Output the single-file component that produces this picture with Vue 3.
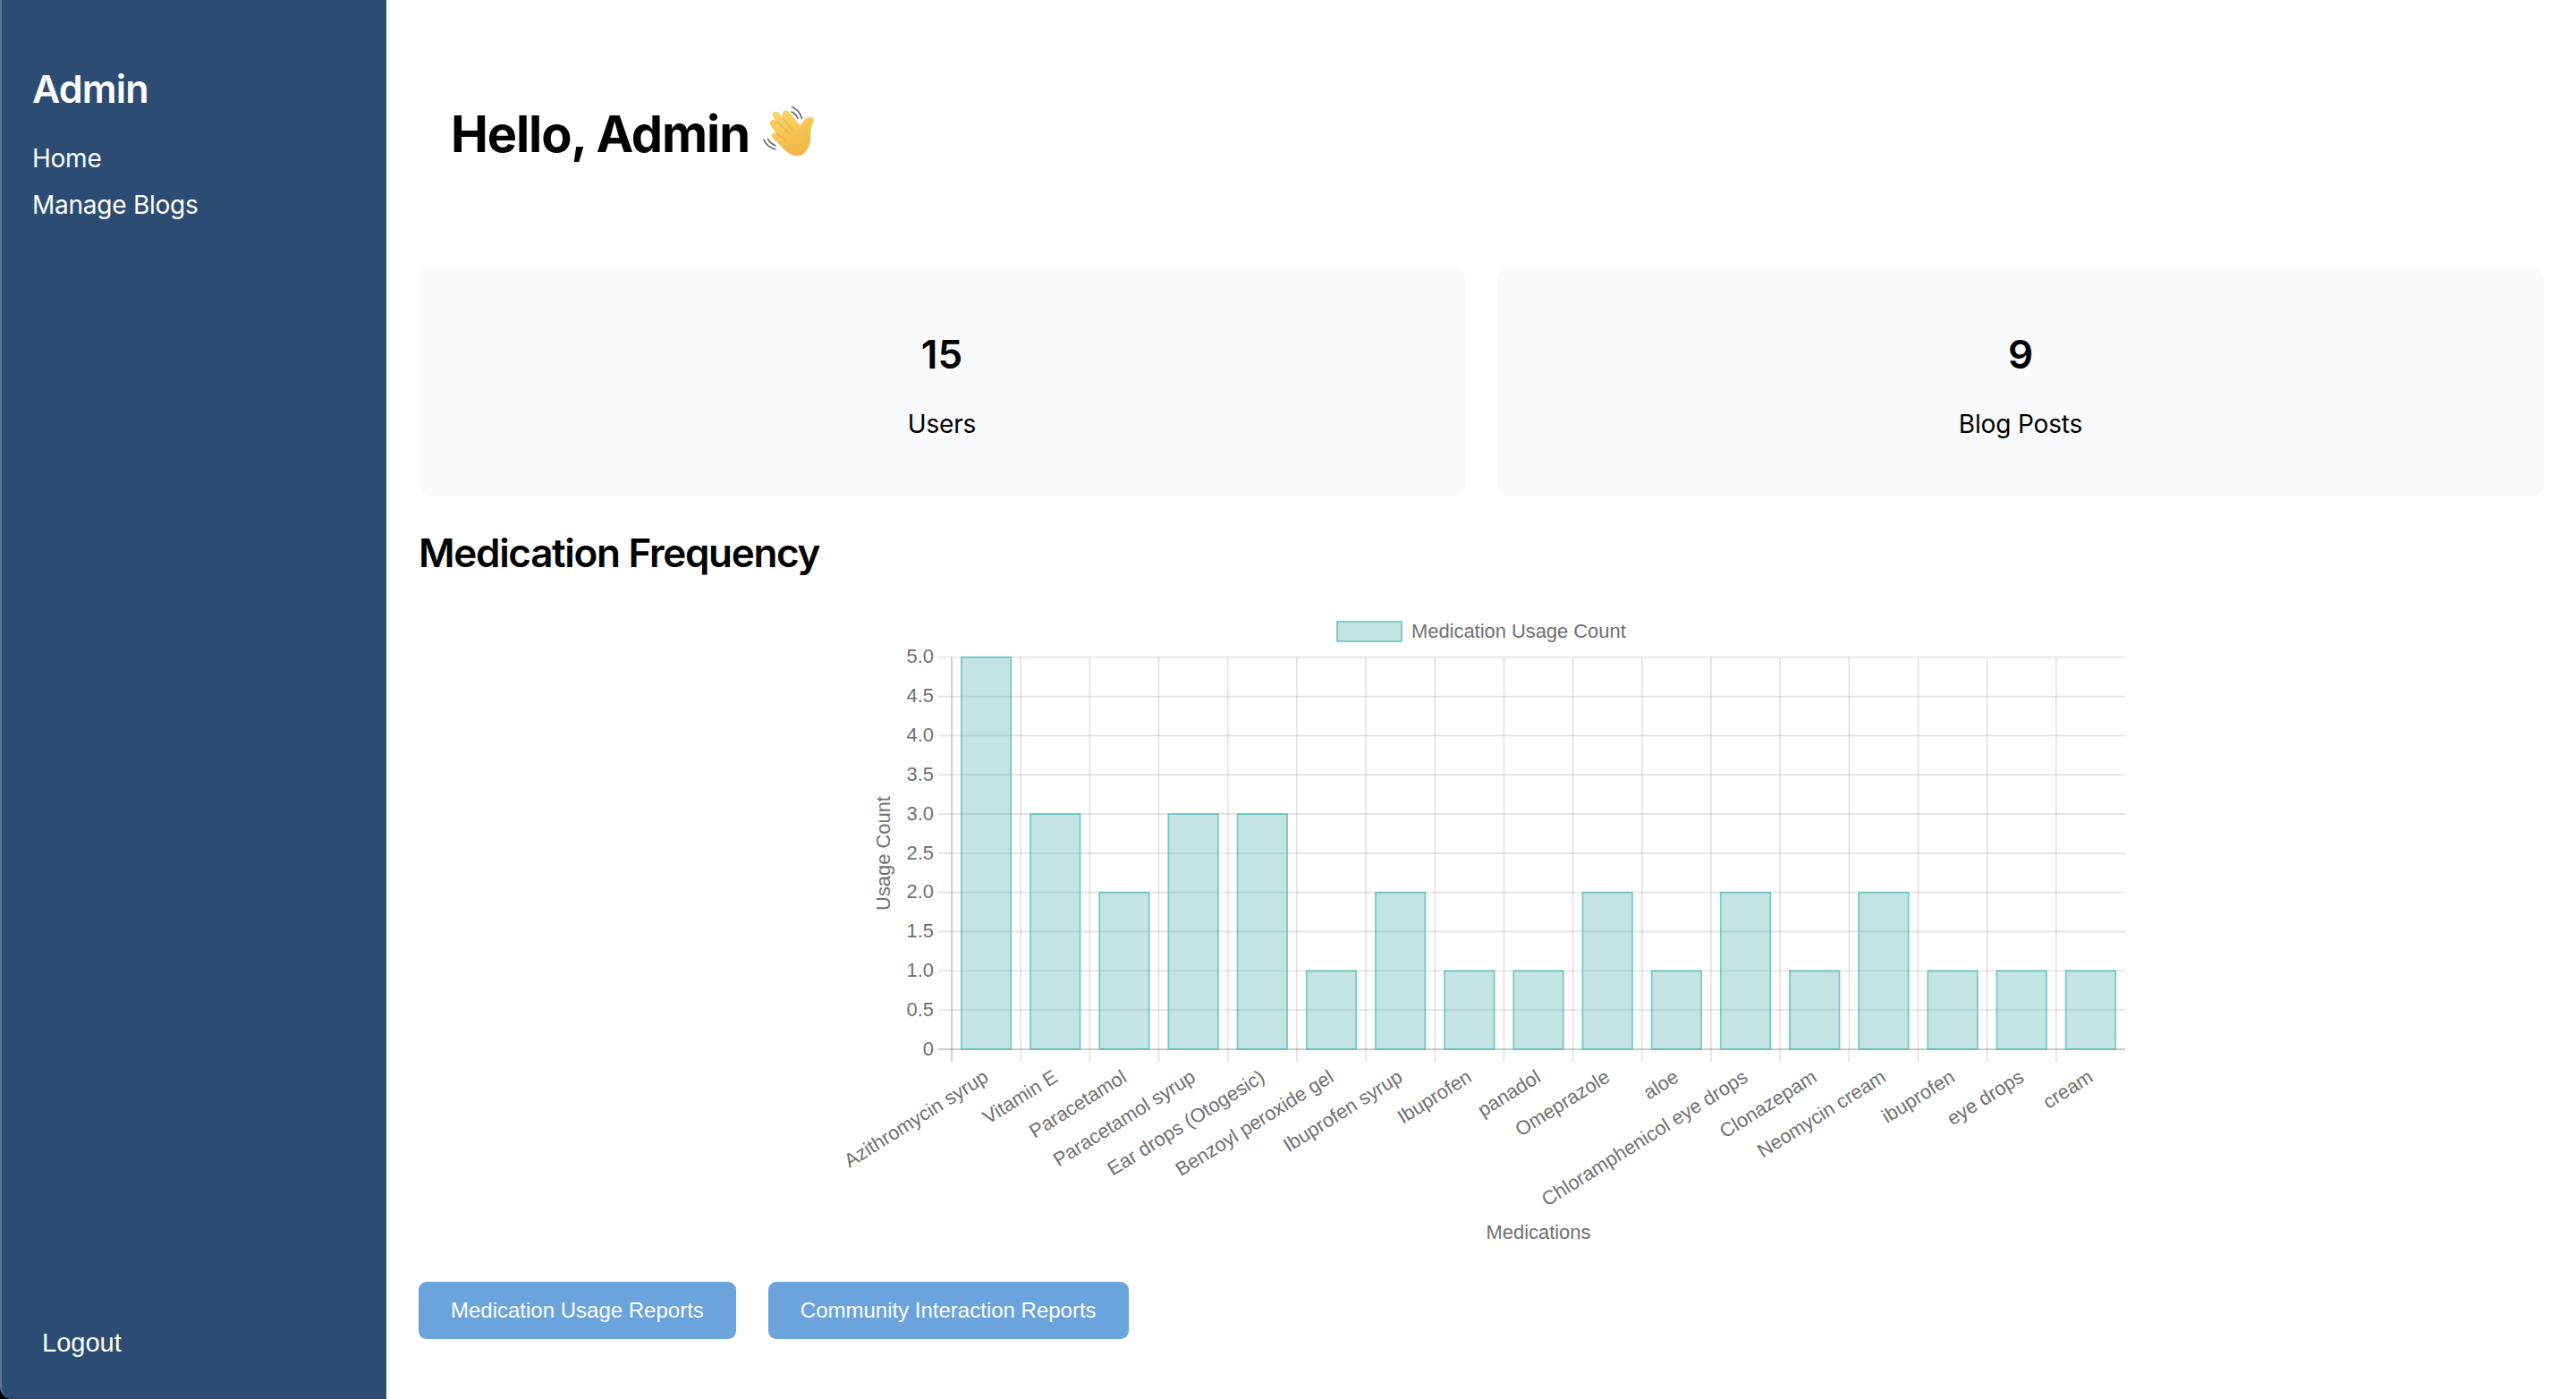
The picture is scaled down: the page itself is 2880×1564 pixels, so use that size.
<script setup>
const meds = [
  ['Azithromycin syrup', 5], ['Vitamin E', 3], ['Paracetamol', 2], ['Paracetamol syrup', 3],
  ['Ear drops (Otogesic)', 3], ['Benzoyl peroxide gel', 1], ['Ibuprofen syrup', 2], ['Ibuprofen', 1],
  ['panadol', 1], ['Omeprazole', 2], ['aloe', 1], ['Chloramphenicol eye drops', 2],
  ['Clonazepam', 1], ['Neomycin cream', 2], ['ibuprofen', 1], ['eye drops', 1], ['cream', 1]
]
const left = 1064, right = 2376, top = 734.7, bottom = 1173
const step = (right - left) / meds.length
const unit = (bottom - top) / 5
const yTicks = Array.from({ length: 11 }, (_, i) => {
  const v = i / 2
  return { label: i === 0 ? '0' : v.toFixed(1), y: bottom - v * unit }
})
const xTicks = meds.map((_, i) => left + i * step)
const bars = meds.map(([name, count], i) => {
  const cx = left + step * (i + 0.5)
  return { name, cx, x: cx - step * 0.36, w: step * 0.72, y: bottom - count * unit, h: count * unit }
})
const stats = [{ value: '15', label: 'Users' }, { value: '9', label: 'Blog Posts' }]
</script>

<template>
  <div class="app">
    <aside class="sidebar">
      <div>
        <h2 class="brand">Admin</h2>
        <nav class="nav">
          <a>Home</a>
          <a>Manage Blogs</a>
        </nav>
      </div>
      <button class="logout">Logout</button>
    </aside>
    <main class="main">
      <h1 class="hello">
        <span>Hello, Admin</span>
        <svg class="wave" viewBox="0 0 300 270" width="100" height="90" aria-hidden="true">
          <defs>
            <linearGradient id="hand" x1="0.2" y1="0" x2="0.6" y2="1">
              <stop offset="0" stop-color="#fbd468" />
              <stop offset="1" stop-color="#f1b545" />
            </linearGradient>
          </defs>
          <g fill="none" stroke="#6b6b6b" stroke-width="5" stroke-linecap="round">
            <path d="M131 44 Q156 54 163 82" />
            <path d="M129 60 Q144 66 150 82" />
            <path d="M36 154 Q44 176 74 186" />
            <path d="M50 151 Q56 166 75 173" />
          </g>
          <path fill="url(#hand)" d="M192 78 C203 78 206 88 201 97 C194 110 193 124 193 140 C193 176 175 208 148 208 C128 208 110 194 96 178 L66 148 C55 137 68 124 79 134 L74 128 L60 107 C49 92 66 80 78 92 L68 79 C58 64 74 52 86 64 L100 82 C92 66 104 44 120 60 L158 106 C164 98 170 88 176 84 C181 80 186 78 192 78 Z" />
          <g fill="none" stroke="#d8983a" stroke-width="2.5" stroke-linecap="round">
            <path d="M100 82 L133 122" />
            <path d="M79 92 L122 134" />
            <path d="M79 134 L112 156" />
          </g>
        </svg>
      </h1>

      <section class="stats">
        <div v-for="s in stats" :key="s.label" class="card">
          <div class="value">{{ s.value }}</div>
          <div class="label">{{ s.label }}</div>
        </div>
      </section>

      <h2 class="section-title">Medication Frequency</h2>

      <div class="chart-wrap">
        <svg class="chart" viewBox="926 660 1460 740" width="1460" height="740">
          <rect x="1495" y="695" width="72" height="22" class="bar" />
          <text x="1578" y="707" class="t" dominant-baseline="middle">Medication Usage Count</text>

          <line v-for="t in yTicks" :key="t.label" :x1="1049" :x2="right" :y1="t.y" :y2="t.y"
            :class="t.y === bottom ? 'axis' : 'grid'" />
          <line v-for="(x, i) in xTicks" :key="i" :x1="x" :x2="x" :y1="top" y2="1187"
            :class="i === 0 ? 'axis' : 'grid'" />

          <text v-for="t in yTicks" :key="'l' + t.label" x="1044" :y="t.y + 1" class="t" text-anchor="end"
            dominant-baseline="middle">{{ t.label }}</text>

          <rect v-for="b in bars" :key="b.name" :x="b.x" :y="b.y" :width="b.w" :height="b.h" class="bar" />

          <text v-for="b in bars" :key="'x' + b.name" :x="b.cx + 1" y="1203" class="t" text-anchor="end"
            dominant-baseline="middle" :transform="`rotate(-32 ${b.cx + 1} 1203)`">{{ b.name }}</text>

          <text x="989" y="954" class="t" text-anchor="middle" dominant-baseline="middle"
            transform="rotate(-90 989 954)">Usage Count</text>
          <text x="1720" y="1379" class="t" text-anchor="middle" dominant-baseline="middle">Medications</text>
        </svg>
      </div>

      <div class="actions">
        <button class="report">Medication Usage Reports</button>
        <button class="report">Community Interaction Reports</button>
      </div>
    </main>
  </div>
</template>

<style scoped>
.app {
  display: flex;
  width: 2880px;
  height: 1564px;
  background: #000;
  font-family: Inter, "Liberation Sans", sans-serif;
  overflow: hidden;
}
.sidebar {
  box-sizing: border-box;
  width: 432px;
  height: 1564px;
  flex: none;
  display: flex;
  flex-direction: column;
  justify-content: space-between;
  padding: 73px 36px 34px 34px;
  background: #2c4c73;
  border-left: 2px solid #5d7898;
  border-bottom-left-radius: 14px;
  color: #fff;
}
.brand {
  margin: 0;
  font-size: 43px;
  line-height: 52px;
  font-weight: 600;
  letter-spacing: -0.8px;
}
.nav {
  display: flex;
  flex-direction: column;
  gap: 16px;
  margin-top: 34px;
}
.nav a {
  font-size: 28px;
  line-height: 36px;
  letter-spacing: -0.25px;
}
.logout {
  align-self: flex-start;
  margin: 0;
  padding: 11px;
  border: 0;
  background: transparent;
  color: #fff;
  font-family: "Liberation Sans", Arial, sans-serif;
  font-size: 29px;
  line-height: 36px;
}
.main {
  flex: 1;
  min-width: 0;
  box-sizing: border-box;
  padding: 36px;
  background: #fff;
}
.hello {
  display: flex;
  align-items: center;
  height: 68px;
  margin: 80px 0 114px;
  padding-left: 36px;
  font-size: 56px;
  line-height: 68px;
  font-weight: 700;
  letter-spacing: -1.1px;
  color: #000;
}
.wave {
  margin-left: 4px;
  flex: none;
}
.stats {
  display: grid;
  grid-template-columns: 1fr 1fr;
  gap: 36px;
}
.card {
  box-sizing: border-box;
  height: 257px;
  padding-top: 72px;
  border-radius: 14px;
  background: #f9fafc;
  text-align: center;
  color: #000;
}
.value {
  font-size: 44px;
  line-height: 52px;
  font-weight: 600;
}
.label {
  margin-top: 34px;
  font-size: 28px;
  line-height: 36px;
  letter-spacing: -0.15px;
}
.section-title {
  margin: 37px 0 0;
  font-size: 44px;
  line-height: 52px;
  font-weight: 600;
  letter-spacing: -1.3px;
  color: #000;
}
.chart-wrap {
  display: flex;
  justify-content: center;
  margin-top: 16px;
}
.chart {
  display: block;
}
.t {
  font-family: "Liberation Sans", Arial, sans-serif;
  font-size: 21.9px;
  fill: #707070;
}
.grid {
  stroke: rgba(0, 0, 0, 0.1);
  stroke-width: 1.8;
}
.axis {
  stroke: rgba(0, 0, 0, 0.2);
  stroke-width: 1.8;
}
.bar {
  fill: rgba(60, 165, 165, 0.3);
  stroke: rgba(75, 185, 185, 0.7);
  stroke-width: 1.8;
}
.actions {
  display: flex;
  gap: 36px;
  margin-top: 33px;
}
.report {
  height: 64px;
  padding: 0 36px;
  border: 0;
  border-radius: 9px;
  background: #6ba3dc;
  color: #fff;
  font-family: "Liberation Sans", Arial, sans-serif;
  font-size: 24px;
}
</style>
